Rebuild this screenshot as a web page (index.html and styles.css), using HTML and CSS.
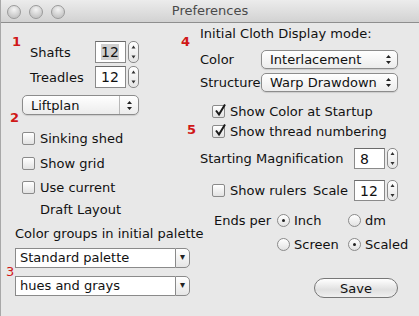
FILE: index.html
```html
<!DOCTYPE html>
<html lang="en">
<head>
    <meta charset="UTF-8">
    <title>Preferences</title>
    <link rel="stylesheet" href="styles.css">
</head>
<body>
    <div class="window">
        <div class="titlebar">
            <div class="lights"><span></span><span></span><span></span></div>
            <div class="title">Preferences</div>
        </div>

        <div class="content">
            <div class="col-left">
                <div class="spin-row first">
                    <span class="spin-label">Shafts</span>
                    <span class="field"><span class="selected">12</span></span>
                    <span class="stepper">
                        <svg width="11" height="22" viewBox="0 0 11 22"><path d="M3.5 7.5 L5.5 4.5 L7.5 7.5 Z M3.5 14.5 L5.5 17.5 L7.5 14.5 Z" fill="#333"/></svg>
                    </span>
                </div>
                <div class="spin-row second">
                    <span class="spin-label">Treadles</span>
                    <span class="field">12</span>
                    <span class="stepper">
                        <svg width="11" height="22" viewBox="0 0 11 22"><path d="M3.5 7.5 L5.5 4.5 L7.5 7.5 Z M3.5 14.5 L5.5 17.5 L7.5 14.5 Z" fill="#333"/></svg>
                    </span>
                </div>

                <div class="popup popup-lift">
                    <span class="popup-text">Liftplan</span>
                    <span class="popup-arrows sep">
                        <svg width="7" height="11" viewBox="0 0 7 11"><path d="M1 4 L3.5 1 L6 4 Z M1 7 L3.5 10 L6 7 Z" fill="#222"/></svg>
                    </span>
                </div>

                <div class="check-row left-check first-check">
                    <span class="checkbox"></span>
                    <span>Sinking shed</span>
                </div>
                <div class="check-row left-check">
                    <span class="checkbox"></span>
                    <span>Show grid</span>
                </div>
                <div class="check-row left-check wrap">
                    <span class="checkbox"></span>
                    <span>Use current<br>Draft Layout</span>
                </div>

                <div class="palette-label">Color groups in initial palette</div>
                <div class="combo combo-first">
                    <span class="combo-text">Standard palette</span>
                    <span class="combo-btn">&#9662;</span>
                </div>
                <div class="combo combo-second">
                    <span class="combo-text">hues and grays</span>
                    <span class="combo-btn">&#9662;</span>
                </div>
            </div>

            <div class="col-right">
                <div class="heading">Initial Cloth Display mode:</div>
                <div class="popup-row first-popup">
                    <span class="popup-label">Color</span>
                    <div class="popup popup-wide">
                        <span class="popup-text">Interlacement</span>
                        <span class="popup-arrows">
                            <svg width="7" height="11" viewBox="0 0 7 11"><path d="M1 4 L3.5 1 L6 4 Z M1 7 L3.5 10 L6 7 Z" fill="#222"/></svg>
                        </span>
                    </div>
                </div>
                <div class="popup-row">
                    <span class="popup-label">Structure</span>
                    <div class="popup popup-wide">
                        <span class="popup-text">Warp Drawdown</span>
                        <span class="popup-arrows">
                            <svg width="7" height="11" viewBox="0 0 7 11"><path d="M1 4 L3.5 1 L6 4 Z M1 7 L3.5 10 L6 7 Z" fill="#222"/></svg>
                        </span>
                    </div>
                </div>

                <div class="check-row right-check first-right">
                    <span class="checkbox checked">
                        <svg width="14" height="14" viewBox="0 0 14 14"><path d="M3 6.5 L6 10.5 L12 0.5" fill="none" stroke="#1a1a1a" stroke-width="2"/></svg>
                    </span>
                    <span>Show Color at Startup</span>
                </div>
                <div class="check-row right-check">
                    <span class="checkbox checked">
                        <svg width="14" height="14" viewBox="0 0 14 14"><path d="M3 6.5 L6 10.5 L12 0.5" fill="none" stroke="#1a1a1a" stroke-width="2"/></svg>
                    </span>
                    <span>Show thread numbering</span>
                </div>

                <div class="spin-row mag-row">
                    <span class="mag-label">Starting Magnification</span>
                    <span class="field">8</span>
                    <span class="stepper">
                        <svg width="11" height="22" viewBox="0 0 11 22"><path d="M3.5 7 L5.5 4 L7.5 7 Z M3.5 14 L5.5 17 L7.5 14 Z" fill="#333"/></svg>
                    </span>
                </div>
                <div class="spin-row ruler-row">
                    <span class="checkbox"></span>
                    <span class="ruler-label">Show rulers</span>
                    <span class="scale-label">Scale</span>
                    <span class="field">12</span>
                    <span class="stepper">
                        <svg width="11" height="22" viewBox="0 0 11 22"><path d="M3.5 7 L5.5 4 L7.5 7 Z M3.5 14 L5.5 17 L7.5 14 Z" fill="#333"/></svg>
                    </span>
                </div>

                <div class="radio-row ends-row">
                    <span class="ends-label">Ends per</span>
                    <span class="radio on"></span><span class="radio-text">Inch</span>
                    <span class="radio"></span><span class="radio-text">dm</span>
                </div>
                <div class="radio-row screen-row">
                    <span class="radio"></span><span class="radio-text">Screen</span>
                    <span class="radio on"></span><span class="radio-text">Scaled</span>
                </div>

                <div class="button-row">
                    <button type="button" class="save-button">Save</button>
                </div>
            </div>
        </div>

        <!-- red annotation numbers -->
        <span class="mark mark-1">1</span>
        <span class="mark mark-2">2</span>
        <span class="mark mark-3">3</span>
        <span class="mark mark-4">4</span>
        <span class="mark mark-5">5</span>
    </div>
</body>
</html>
```

FILE: styles.css
```css
body {
    margin: 0;
    padding: 0;
    font-family: 'DejaVu Sans', sans-serif;
    font-size: 13px;
    color: #111;
}

.window {
    position: relative;
    width: 419px;
    height: 316px;
    background-color: #e8e8e8;
    border-left: 1px solid #a8a8a8;
    box-sizing: border-box;
    overflow: hidden;
}

.titlebar {
    position: relative;
    height: 22px;
    background: linear-gradient(#ececec, #d2d2d2);
    border-bottom: 1px solid #8e8e8e;
}

.lights {
    display: flex;
    gap: 8px;
    padding: 5px 0 0 6px;
}

.lights span {
    width: 12px;
    height: 12px;
    border-radius: 50%;
    border: 1px solid #9a9a9a;
    background: radial-gradient(circle at 50% 30%, #f4f4f4, #c8c8c8 70%);
}

.title {
    position: absolute;
    top: 0;
    left: 0;
    right: 0;
    line-height: 22px;
    text-align: center;
    color: #4a4a4a;
}

.content {
    display: flex;
}

.col-left {
    width: 199px;
}

.col-right {
    flex: 1;
}

/* number fields with steppers */
.spin-row {
    display: flex;
    align-items: center;
}

.spin-row.first {
    margin-top: 18px;
}

.spin-row.second {
    margin-top: 3px;
}

.spin-label {
    width: 65px;
    margin-left: 29px;
}

.field {
    width: 31px;
    height: 22px;
    box-sizing: border-box;
    background: #fff;
    border: 1px solid #8a8a8a;
    border-top-color: #6a6a6a;
    padding: 2px 0 0 5px;
    font-size: 14px;
}

.selected {
    background: #cfcfcf;
}

.stepper {
    width: 11px;
    height: 22px;
    margin-left: 2px;
    box-sizing: border-box;
    border: 1px solid #8a8a8a;
    border-radius: 5px;
    background: linear-gradient(#ffffff, #e4e4e4);
    overflow: hidden;
}

.stepper svg {
    display: block;
    margin: -1px 0 0 -1px;
}

/* popup buttons */
.popup {
    display: flex;
    align-items: center;
    height: 20px;
    box-sizing: border-box;
    border: 1px solid #8c8c8c;
    border-radius: 5px;
    background: linear-gradient(#ffffff, #ececec);
    box-shadow: 0 1px 1px rgba(0, 0, 0, 0.12);
}

.popup-text {
    flex: 1;
    padding-left: 8px;
}

.popup-arrows {
    width: 18px;
    height: 100%;
    display: flex;
    align-items: center;
    justify-content: center;
}

.popup-arrows.sep {
    border-left: 1px solid #b8b8b8;
}

.popup-lift {
    width: 117px;
    margin: 7px 0 0 21px;
}

/* checkboxes */
.check-row {
    display: flex;
    align-items: center;
    height: 22px;
}

.checkbox {
    width: 13px;
    height: 13px;
    box-sizing: border-box;
    border: 1px solid #8a8a8a;
    border-radius: 2px;
    background: linear-gradient(#ffffff, #e2e2e2);
    flex-shrink: 0;
    position: relative;
}

.checkbox svg {
    position: absolute;
    left: 0;
    top: -2px;
}

.left-check {
    margin-left: 21px;
    margin-top: 3px;
}

.left-check .checkbox {
    margin-right: 5px;
}

.left-check.first-check {
    margin-top: 12px;
}

.left-check.wrap {
    height: auto;
    align-items: flex-start;
    line-height: 22px;
}

.left-check.wrap .checkbox {
    margin-top: 4px;
}

.palette-label {
    margin: 2px 0 0 14px;
    line-height: 22px;
    white-space: nowrap;
}

/* combo boxes */
.combo {
    display: flex;
    width: 175px;
    height: 20px;
    margin-left: 14px;
}

.combo-first {
    margin-top: 3px;
}

.combo-second {
    margin-top: 8px;
}

.combo-text {
    flex: 1;
    background: #fff;
    border: 1px solid #8a8a8a;
    border-right: none;
    padding-left: 4px;
    line-height: 18px;
}

.combo-btn {
    width: 15px;
    box-sizing: border-box;
    border: 1px solid #8a8a8a;
    border-radius: 0 5px 5px 0;
    background: linear-gradient(#ffffff, #e6e6e6);
    text-align: center;
    font-size: 10px;
    line-height: 16px;
    color: #222;
}

/* right column */
.heading {
    margin-top: 1px;
    line-height: 20px;
}

.popup-row {
    display: flex;
    align-items: center;
    margin-top: 4px;
}

.popup-row.first-popup {
    margin-top: 6px;
}

.popup-label {
    width: 61px;
}

.popup-wide {
    width: 137px;
    height: 19px;
}

.right-check {
    margin-left: 12px;
    height: 20px;
}

.right-check .checkbox {
    margin-right: 5px;
}

.right-check.first-right {
    margin-top: 9px;
}

.mag-row {
    margin-top: 7px;
}

.mag-label {
    width: 154px;
}

.mag-row .field,
.ruler-row .field,
.mag-row .stepper,
.ruler-row .stepper {
    height: 21px;
}

.ruler-row {
    margin-top: 11px;
}

.ruler-row .checkbox {
    margin-left: 12px;
    margin-right: 5px;
}

.ruler-label {
    width: 83px;
}

.scale-label {
    width: 41px;
}

/* radio buttons */
.radio-row {
    display: flex;
    align-items: center;
    height: 20px;
}

.ends-row {
    margin-top: 9px;
}

.screen-row {
    margin-top: 4px;
    padding-left: 77px;
}

.ends-label {
    margin-left: 14px;
    width: 63px;
}

.radio {
    width: 13px;
    height: 13px;
    box-sizing: border-box;
    border: 1px solid #8a8a8a;
    border-radius: 50%;
    background: linear-gradient(#ffffff, #e2e2e2);
    position: relative;
    margin-right: 4px;
}

.radio.on::after {
    content: "";
    position: absolute;
    left: 4px;
    top: 4px;
    width: 3px;
    height: 3px;
    border-radius: 50%;
    background: #222;
}

.radio-text {
    width: 54px;
}

.button-row {
    margin: 24px 0 0 114px;
}

.save-button {
    width: 84px;
    height: 20px;
    border: 1px solid #777;
    border-radius: 10px;
    background: linear-gradient(#ffffff, #e0e0e0 60%, #f0f0f0);
    font-family: 'DejaVu Sans', sans-serif;
    font-size: 13px;
    color: #111;
    padding: 0;
}

/* red annotation marks */
.mark {
    position: absolute;
    color: #d01818;
    font-weight: bold;
    font-size: 13px;
}

.mark-1 { left: 11px; top: 34px; }
.mark-2 { left: 9px; top: 110px; }
.mark-3 { left: 5px; top: 264px; font-weight: normal; }
.mark-4 { left: 180px; top: 34px; }
.mark-5 { left: 186px; top: 122px; }
```
